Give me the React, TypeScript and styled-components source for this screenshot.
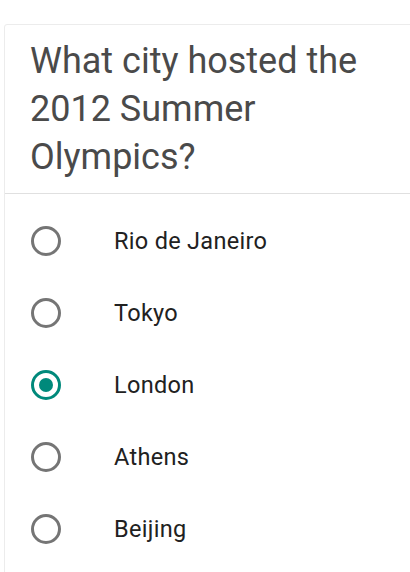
import React, { useState } from "react";
import styled, { createGlobalStyle } from "styled-components";

const Global = createGlobalStyle`
  html, body { margin: 0; padding: 0; background: #ffffff; overflow: hidden; }
  body { font-family: Roboto, "Noto Sans", "Liberation Sans", sans-serif; }
`;

const Page = styled.div`
  padding: 24px 0 0 4px;
  width: 410px;
  height: 572px;
  box-sizing: border-box;
  overflow: hidden;
`;

const Card = styled.section`
  width: 440px;
  border: 1px solid #ececec;
  border-radius: 3px;
  background: #fff;
  padding-bottom: 40px;
`;

const Header = styled.div`
  padding: 12px 24px 12px 25px;
  border-bottom: 1px solid #e0e0e0;
`;

const Question = styled.h1`
  margin: 0;
  max-width: 340px;
  font-size: 36px;
  font-weight: 400;
  line-height: 48px;
  color: #4a4a4a;
`;

const Options = styled.div`
  display: flex;
  flex-direction: column;
  padding-top: 11px;
`;

const Row = styled.label`
  display: flex;
  align-items: center;
  height: 72px;
  padding-left: 26px;
  cursor: pointer;
`;

const Circle = styled.span<{ $checked: boolean }>`
  box-sizing: border-box;
  width: 30px;
  height: 30px;
  border-radius: 50%;
  border: 3px solid ${(p) => (p.$checked ? "#00897b" : "#757575")};
  display: flex;
  align-items: center;
  justify-content: center;
  flex-shrink: 0;
  &::after {
    content: "";
    width: 14px;
    height: 14px;
    border-radius: 50%;
    background: #00897b;
    display: ${(p) => (p.$checked ? "block" : "none")};
  }
`;

const Label = styled.span`
  margin-left: 53px;
  font-size: 23.5px;
  letter-spacing: 0.3px;
  color: #212121;
`;

const choices = ["Rio de Janeiro", "Tokyo", "London", "Athens", "Beijing"];

export default function App() {
  const [sel, setSel] = useState("London");
  return (
    <>
      <Global />
      <Page>
        <Card>
          <Header>
            <Question>What city hosted the 2012 Summer Olympics?</Question>
          </Header>
          <Options>
            {choices.map((c) => (
              <Row key={c} onClick={() => setSel(c)}>
                <Circle $checked={sel === c} />
                <Label>{c}</Label>
              </Row>
            ))}
          </Options>
        </Card>
      </Page>
    </>
  );
}
